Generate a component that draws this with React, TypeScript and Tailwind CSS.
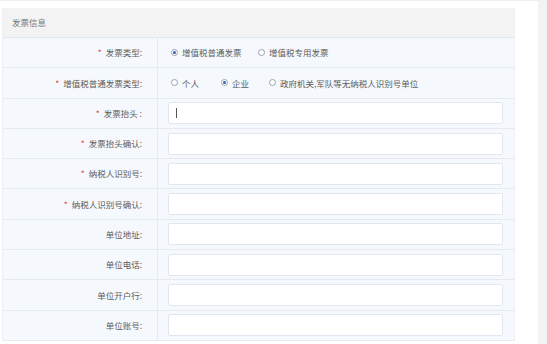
import * as React from 'react';

const FONT = { fontFamily: '"Noto Sans CJK SC", "Noto Sans", sans-serif' };

type Row = { label: string; required?: boolean; kind: 'radio1' | 'radio2' | 'input'; cursor?: boolean };

const rows: Row[] = [
  { label: '发票类型:', required: true, kind: 'radio1' },
  { label: '增值税普通发票类型:', required: true, kind: 'radio2' },
  { label: '发票抬头 :', required: true, kind: 'input', cursor: true },
  { label: '发票抬头确认:', required: true, kind: 'input' },
  { label: '纳税人识别号:', required: true, kind: 'input' },
  { label: '纳税人识别号确认:', required: true, kind: 'input' },
  { label: '单位地址:', kind: 'input' },
  { label: '单位电话:', kind: 'input' },
  { label: '单位开户行:', kind: 'input' },
  { label: '单位账号:', kind: 'input' },
];

function Radio({ checked, label, className }: { checked?: boolean; label: string; className?: string }) {
  return (
    <span className={`flex shrink-0 items-center gap-[4px] ${className ?? ''}`}>
      <span className="flex size-[7px] items-center justify-center rounded-full border border-[#9aa3ad] bg-white">
        {checked && <span className="size-[3px] rounded-full bg-[#2f5fb8]" />}
      </span>
      <span>{label}</span>
    </span>
  );
}

export default function App() {
  return (
    <div className="relative h-[344px] w-[547px] overflow-hidden bg-white text-[8.5px] text-[#5c5c5c]" style={FONT}>
      <div className="absolute right-0 top-0 h-full w-[9px] bg-[#f3f3f4]" />
      <div className="h-[8px] border-t border-[#eeeeee]" />
      <div className="ml-[2px] w-[513px] border-l border-r border-[#eceff3]">
        <div className="flex h-[30px] items-center border-b border-[#e4e8ee] bg-[#f3f3f3] pl-[9px] text-[#777]">
          发票信息
        </div>
        {rows.map((r) => (
          <div key={r.label} className="flex h-[30.3px] border-b border-[#e5eaf2] bg-[#f5f8fd]">
            <div className="flex w-[155px] items-center justify-end border-r border-[#e5eaf2] pr-[15px]">
              {r.required && <span className="mr-[4px] text-[#e0463b]">*</span>}
              <span>{r.label}</span>
            </div>
            <div className="flex flex-1 items-center pl-[10px] pr-[11px]">
              {r.kind === 'radio1' && (
                <div className="flex items-center pl-[3px]">
                  <Radio checked label="增值税普通发票" className="w-[87px]" />
                  <Radio label="增值税专用发票" />
                </div>
              )}
              {r.kind === 'radio2' && (
                <div className="flex items-center pl-[3px]">
                  <Radio label="个人" className="w-[50px]" />
                  <Radio checked label="企业" className="w-[48px]" />
                  <Radio label="政府机关,军队等无纳税人识别号单位" />
                </div>
              )}
              {r.kind === 'input' && (
                <div className="flex h-[22px] w-full items-center rounded-[2px] border border-[#e2e7ef] bg-white pl-[7px]">
                  {r.cursor && <span className="h-[10px] w-px bg-[#555]" />}
                </div>
              )}
            </div>
          </div>
        ))}
      </div>
    </div>
  );
}
